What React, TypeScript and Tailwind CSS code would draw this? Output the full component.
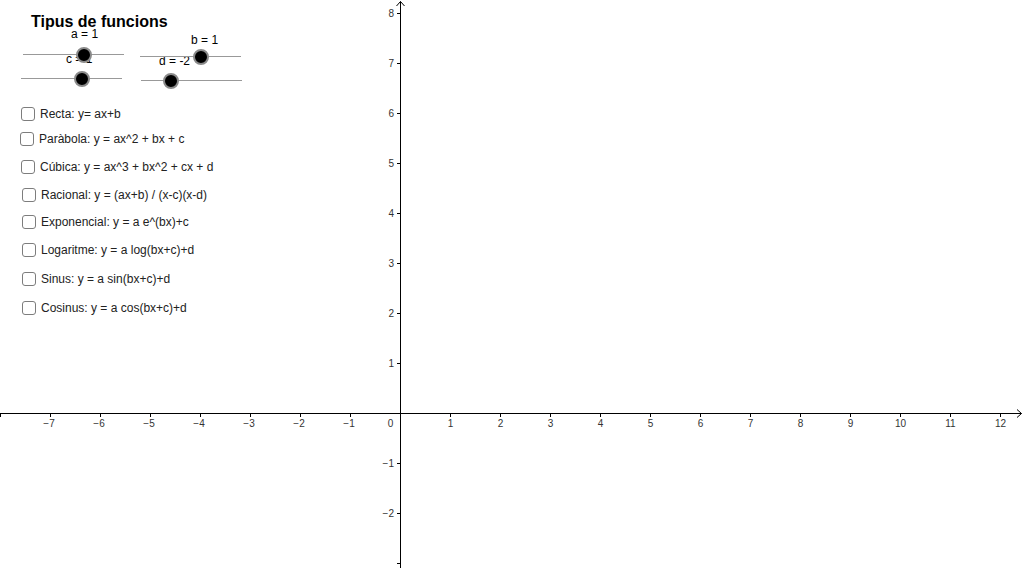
import React from 'react'

const ORIGIN_X = 400.5
const ORIGIN_Y = 413.5
const UNIT = 50

const sliders = [
  { name: 'a', value: 1, pos: 'left-[23px] top-[54px]', label: 'left-[71px] top-[28px]' },
  { name: 'c', value: 1, pos: 'left-[21px] top-[78px]', label: 'left-[66px] top-[53px]' },
  { name: 'b', value: 1, pos: 'left-[140px] top-[56px]', label: 'left-[191px] top-[34px]' },
  { name: 'd', value: -2, pos: 'left-[141px] top-[80px]', label: 'left-[159px] top-[55px]' },
]

const options = [
  { text: 'Recta: y= ax+b', cls: 'ml-[21px]' },
  { text: 'Paràbola: y = ax^2 + bx + c', cls: 'ml-[20px] mt-[11px]' },
  { text: 'Cúbica: y = ax^3 + bx^2 + cx + d', cls: 'ml-[21px] mt-[14px]' },
  { text: 'Racional: y = (ax+b) / (x-c)(x-d)', cls: 'ml-[22px] mt-[14px]' },
  { text: 'Exponencial: y = a e^(bx)+c', cls: 'ml-[22px] mt-[13px]' },
  { text: 'Logaritme: y = a log(bx+c)+d', cls: 'ml-[22px] mt-[14px]' },
  { text: 'Sinus: y = a sin(bx+c)+d', cls: 'ml-[22px] mt-[15px]' },
  { text: 'Cosinus: y = a cos(bx+c)+d', cls: 'ml-[22px] mt-[15px]' },
]

function range(from: number, to: number) {
  const out: number[] = []
  for (let i = from; i <= to; i++) out.push(i)
  return out
}

function fmt(n: number) {
  return n < 0 ? `\u2212${-n}` : `${n}`
}

/** Graphics view: axes, ticks and tick labels */
function Axes() {
  const xTicks = range(-8, 12)
  const yTicks = range(-3, 8)
  const digit = 5.56

  return (
    <svg
      width={1024}
      height={568}
      className="absolute inset-0 font-['Liberation_Sans',Arial,sans-serif] text-[10px]"
    >
      {/* axes */}
      <line x1={0} y1={ORIGIN_Y} x2={1021.5} y2={ORIGIN_Y} stroke="#000" strokeWidth={1} />
      <line x1={ORIGIN_X} y1={1.5} x2={ORIGIN_X} y2={568} stroke="#000" strokeWidth={1} />
      <polyline points="1017,409.5 1021.5,413.5 1017,417.5" fill="none" stroke="#000" strokeWidth={1} />
      <polyline points="396.5,6 400.5,1.5 404.5,6" fill="none" stroke="#000" strokeWidth={1} />

      {xTicks
        .filter((n) => n !== 0)
        .map((n) => {
          const x = ORIGIN_X + n * UNIT
          const digits = String(Math.abs(n)).length
          return (
            <g key={`x${n}`}>
              <line x1={x} y1={ORIGIN_Y} x2={x} y2={ORIGIN_Y + 3.5} stroke="#000" strokeWidth={1} />
              {n > -8 &&
                (n < 0 ? (
                  <text x={x + (digits * digit) / 2 + 1.5} y={427} textAnchor="end" fill="#333">
                    {fmt(n)}
                  </text>
                ) : (
                  <text x={x} y={427} textAnchor="middle" fill="#333">
                    {fmt(n)}
                  </text>
                ))}
            </g>
          )
        })}

      <text x={390.5} y={427} textAnchor="middle" fill="#333">
        0
      </text>

      {yTicks
        .filter((n) => n !== 0)
        .map((n) => {
          const y = ORIGIN_Y - n * UNIT
          return (
            <g key={`y${n}`}>
              <line x1={ORIGIN_X - 3.5} y1={y} x2={ORIGIN_X} y2={y} stroke="#000" strokeWidth={1} />
              {n > -3 && (
                <text x={394} y={y + 3.6} textAnchor="end" fill="#333">
                  {fmt(n)}
                </text>
              )}
            </g>
          )
        })}
    </svg>
  )
}

function Checkbox() {
  return <span className="block w-[14px] h-[14px] shrink-0 rounded-[3px] border-[1.5px] border-[#7d7d7d] bg-white" />
}

export default function App() {
  return (
    <div className="relative w-[1024px] h-[568px] overflow-hidden bg-white font-['Liberation_Sans',Arial,sans-serif] text-[#222]">
      <Axes />

      {/* title */}
      <div className="absolute left-[31px] top-[14px] text-[16px] leading-none font-bold text-black">
        Tipus de funcions
      </div>

      {/* slider labels */}
      {sliders.map((s) => (
        <span key={`l${s.name}`} className={`absolute ${s.label} text-[12px] leading-none text-black`}>
          {s.name} = {s.value}
        </span>
      ))}

      {/* sliders */}
      {sliders.map((s) => (
        <div key={s.name} className={`absolute ${s.pos} w-[101px] h-px bg-[#999]`}>
          <span
            className="absolute top-[0.5px] z-10 w-[16px] h-[16px] -translate-x-1/2 -translate-y-1/2 rounded-full border-2 border-[#8a8a8a] bg-black"
            style={{ left: ((s.value + 5) / 10) * 101 }}
          />
        </div>
      ))}

      {/* function checkboxes */}
      <div className="absolute left-0 top-[107px] flex flex-col">
        {options.map((o) => (
          <label key={o.text} className={`flex items-center gap-[5px] ${o.cls}`}>
            <Checkbox />
            <span className="text-[12px] leading-none whitespace-nowrap">{o.text}</span>
          </label>
        ))}
      </div>
    </div>
  )
}
